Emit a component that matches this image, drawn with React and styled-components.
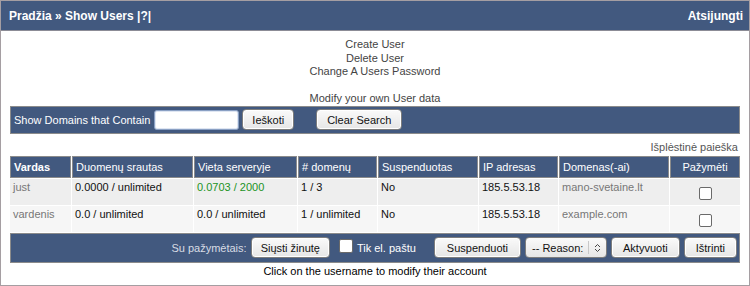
import styled, { createGlobalStyle } from "styled-components";

const GlobalStyle = createGlobalStyle`
  html, body {
    margin: 0;
    padding: 0;
    background: #fff;
  }
  body {
    font-family: "Liberation Sans", Arial, sans-serif;
    font-size: 11px;
    color: #000;
  }
`;

const Frame = styled.div`
  width: 750px;
  height: 286px;
  box-sizing: border-box;
  border: 1px solid #a59ea2;
  background: #fff;
  display: flex;
  flex-direction: column;
`;

const TopBar = styled.div`
  height: 29px;
  flex-shrink: 0;
  background: #42597f;
  border-bottom: 1px solid #8c8c96;
  display: flex;
  align-items: center;
  justify-content: space-between;
  padding: 0 6px 0 8px;
  color: #fff;
  font-weight: bold;
  font-size: 12px;
`;

const Content = styled.div`
  padding: 7px 9px 0 9px;
  display: flex;
  flex-direction: column;
`;

const Links = styled.div`
  text-align: center;
  color: #444;
  line-height: 13.5px;
  font-size: 11px;
`;

const Bar = styled.div`
  background: #42597f;
  border: 1px solid #8b8b8b;
  display: flex;
  align-items: center;
  justify-content: ${(p) => (p.$right ? "flex-end" : "flex-start")};
  height: ${(p) => p.$h}px;
  flex-shrink: 0;
  box-sizing: border-box;
  padding: 0 ${(p) => (p.$right ? "2px" : "0")} 0 3px;
  margin-top: ${(p) => p.$mt || 0}px;
  color: #fff;
  gap: ${(p) => p.$gap || 4}px;
`;

const BarLabel = styled.span`
  color: ${(p) => (p.$muted ? "#d8dce4" : "#fff")};
  font-size: 11px;
  margin-right: ${(p) => p.$mr || 0}px;
`;

const TextInput = styled.input`
  width: 85px;
  height: 20px;
  box-sizing: border-box;
  border: 1px solid #8aa0c4;
  border-radius: 3px;
  box-shadow: inset 0 0 0 1px #dfe6f2;
  padding: 0 3px;
  font-family: inherit;
  font-size: 11px;
  outline: none;
  margin-left: 1px;
`;

const Button = styled.button`
  height: 21px;
  box-sizing: border-box;
  padding: 0 ${(p) => p.$px || 12}px;
  border: 1px solid #7d7d7d;
  border-radius: 4px;
  background: linear-gradient(#fafafa, #e6e6e6);
  box-shadow: inset 0 0 0 1px #fff;
  font-family: inherit;
  font-size: 11px;
  color: #111;
  margin-left: ${(p) => p.$ml || 0}px;
`;

const SelectBox = styled.div`
  height: 21px;
  width: 82px;
  box-sizing: border-box;
  border: 1px solid #7d7d7d;
  border-radius: 4px;
  background: linear-gradient(#fafafa, #e6e6e6);
  display: flex;
  align-items: center;
  font-size: 11px;
  color: #111;
  padding-left: 6px;
`;

const SelectText = styled.span`
  flex: 1;
`;

const SelectArrow = styled.span`
  width: 17px;
  height: 13px;
  border-left: 1px solid #c8c8c8;
  display: flex;
  align-items: center;
  justify-content: center;
`;

const Advanced = styled.div`
  text-align: right;
  color: #555;
  padding: 5px 2px 0 0;
  height: 16px;
  line-height: 16px;
`;

const Table = styled.table`
  border-collapse: separate;
  border-spacing: 1px;
  table-layout: fixed;
  margin: 0 -1px;
  width: 732px;
  font-size: 11px;
`;

const Th = styled.th`
  background: #42597f;
  color: #fff;
  font-weight: ${(p) => (p.$bold ? "bold" : "normal")};
  text-align: ${(p) => (p.$center ? "center" : "left")};
  height: 22px;
  padding: 0 3px;
  border: 1px solid #8b8b8b;
  width: ${(p) => p.$w}px;
  box-sizing: border-box;
  white-space: nowrap;
`;

const Td = styled.td`
  background: ${(p) => p.$bg};
  color: ${(p) => p.$color || "#111"};
  height: 26px;
  box-sizing: border-box;
  padding: 2px 3px 0;
  text-align: ${(p) => (p.$center ? "center" : "left")};
  vertical-align: top;
  white-space: nowrap;
`;

const Check = styled.span`
  display: inline-block;
  width: 11px;
  height: 11px;
  border: 1px solid #6a6a6a;
  border-radius: 2px;
  background: #fff;
  margin-top: 6px;
`;

const BarCheck = styled(Check)`
  margin: 0 0 3px 5px;
  width: 12px;
  height: 12px;
`;

const Hint = styled.div`
  text-align: center;
  padding-top: 2px;
  line-height: 13px;
  color: #000;
`;

const rows = [
  {
    name: "just",
    traffic: "0.0000 / unlimited",
    space: "0.0703 / 2000",
    spaceColor: "#22931f",
    domains: "1 / 3",
    suspended: "No",
    ip: "185.5.53.18",
    domain: "mano-svetaine.lt",
    bg: "#eeeeee",
  },
  {
    name: "vardenis",
    traffic: "0.0 / unlimited",
    space: "0.0 / unlimited",
    domains: "1 / unlimited",
    suspended: "No",
    ip: "185.5.53.18",
    domain: "example.com",
    bg: "#f6f6f6",
  },
];

const App = () => {
  return (
    <>
      <GlobalStyle />
      <Frame>
        <TopBar>
          <span>Pradžia » Show Users |?|</span>
          <span>Atsijungti</span>
        </TopBar>
        <Content>
          <Links>
            Create User
            <br />
            Delete User
            <br />
            Change A Users Password
            <br />
            <br />
            Modify your own User data
          </Links>
          <Bar $h={28} $gap={3}>
            <BarLabel>Show Domains that Contain</BarLabel>
            <TextInput defaultValue="" />
            <Button $px={9}>Ieškoti</Button>
            <Button $px={10} $ml={19}>
              Clear Search
            </Button>
          </Bar>
          <Advanced>Išplėstinė paieška</Advanced>
          <Table>
            <thead>
              <tr>
                <Th $bold $w={61}>Vardas</Th>
                <Th $w={121}>Duomenų srautas</Th>
                <Th $w={103}>Vieta serveryje</Th>
                <Th $w={79}># domenų</Th>
                <Th $w={100}>Suspenduotas</Th>
                <Th $w={79}>IP adresas</Th>
                <Th $w={110}>Domenas(-ai)</Th>
                <Th $w={70} $center>
                  Pažymėti
                </Th>
              </tr>
            </thead>
            <tbody>
              {rows.map((r) => (
                <tr key={r.name}>
                  <Td $bg={r.bg} $color="#777">
                    {r.name}
                  </Td>
                  <Td $bg={r.bg}>{r.traffic}</Td>
                  <Td $bg={r.bg} $color={r.spaceColor}>
                    {r.space}
                  </Td>
                  <Td $bg={r.bg}>{r.domains}</Td>
                  <Td $bg={r.bg}>{r.suspended}</Td>
                  <Td $bg={r.bg}>{r.ip}</Td>
                  <Td $bg={r.bg} $color="#777">
                    {r.domain}
                  </Td>
                  <Td $bg={r.bg} $center>
                    <Check />
                  </Td>
                </tr>
              ))}
            </tbody>
          </Table>
          <Bar $h={30} $right>
            <BarLabel $muted>Su pažymėtais:</BarLabel>
            <Button $px={9}>Siųsti žinutę</Button>
            <BarCheck />
            <BarLabel $mr={14}>Tik el. paštu</BarLabel>
            <Button $px={12}>Suspenduoti</Button>
            <SelectBox>
              <SelectText>-- Reason:</SelectText>
              <SelectArrow>
                <svg width="7" height="10" viewBox="0 0 7 10">
                  <path
                    d="M1 4 L3.5 1.5 L6 4 M1 6 L3.5 8.5 L6 6"
                    fill="none"
                    stroke="#444"
                    strokeWidth="1"
                  />
                </svg>
              </SelectArrow>
            </SelectBox>
            <Button $px={11}>Aktyvuoti</Button>
            <Button $px={11}>Ištrinti</Button>
          </Bar>
          <Hint>Click on the username to modify their account</Hint>
        </Content>
      </Frame>
    </>
  );
};

export default App;
